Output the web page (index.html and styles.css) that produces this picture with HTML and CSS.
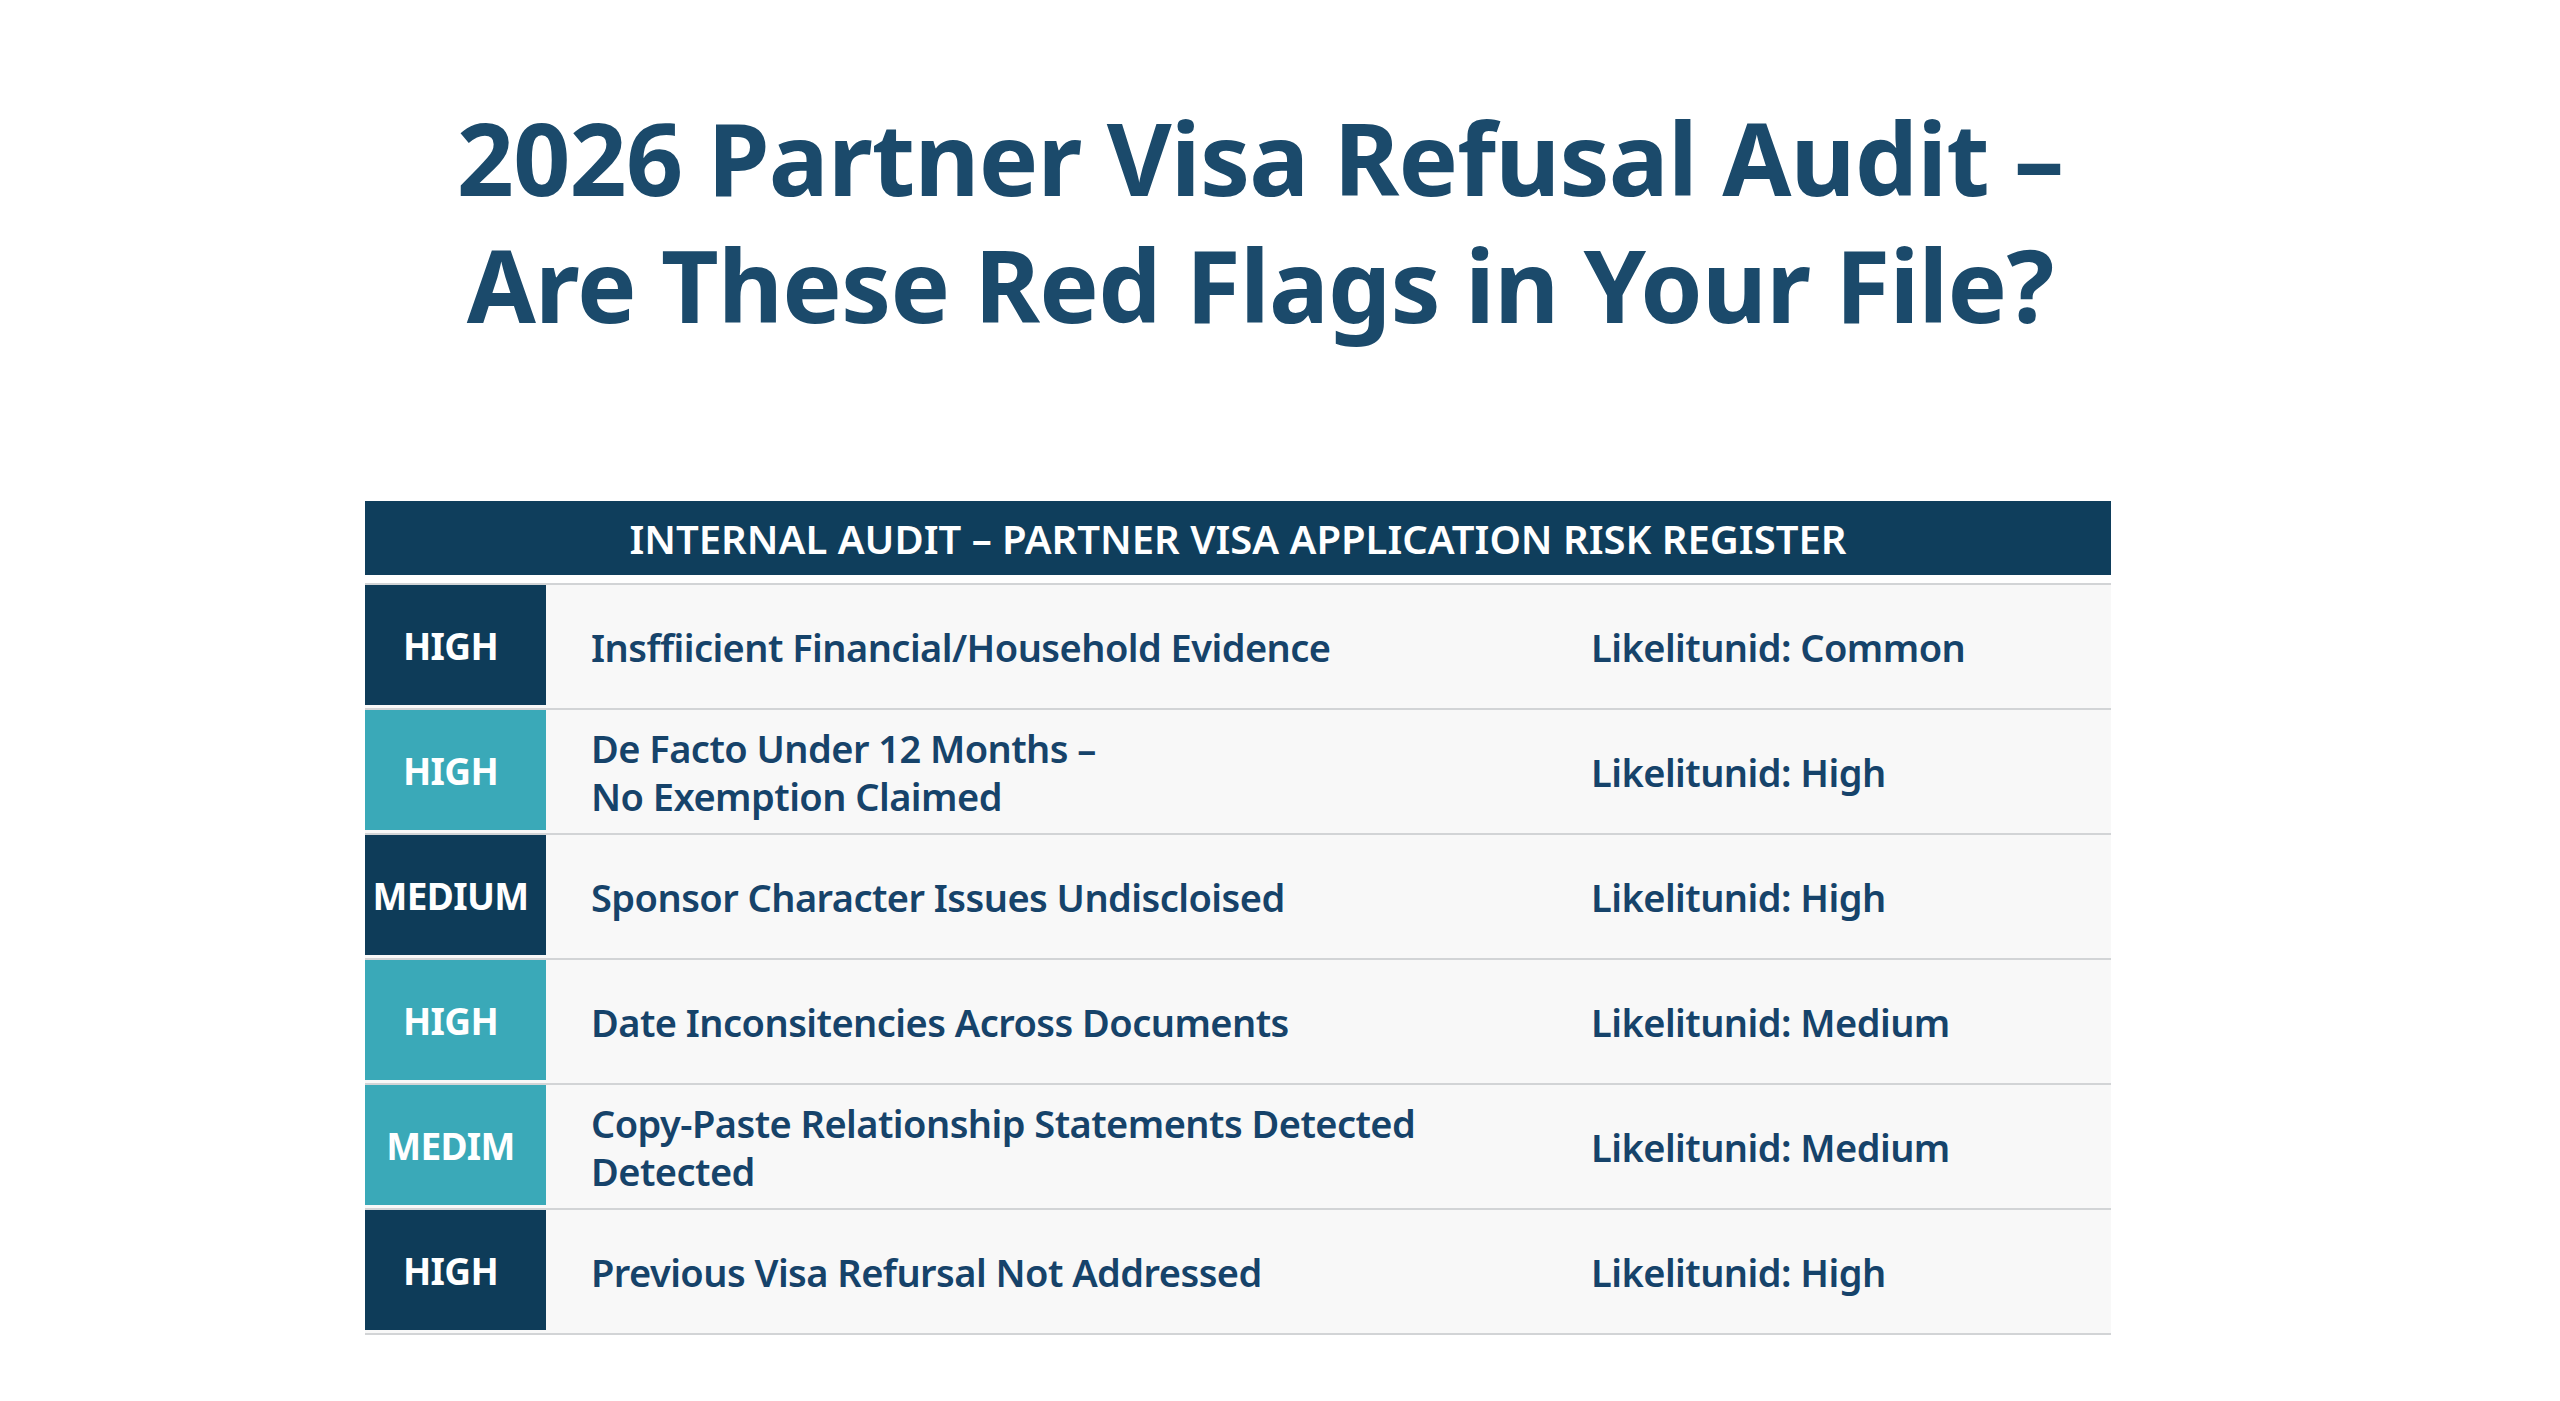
FILE: index.html
```html
<!DOCTYPE html>
<html lang="en">
<head>
<meta charset="utf-8">
<title>2026 Partner Visa Refusal Audit</title>
<link rel="stylesheet" href="styles.css">
</head>
<body>
<main class="page">
  <h1 class="title">2026 Partner Visa Refusal Audit –<br>Are These Red Flags in Your File?</h1>

  <section class="register">
    <header class="register-head">INTERNAL AUDIT – PARTNER VISA APPLICATION RISK REGISTER</header>

    <div class="row">
      <div class="badge badge-dark">HIGH</div>
      <div class="desc">Insffiicient Financial/Household Evidence</div>
      <div class="likely">Likelitunid: Common</div>
    </div>

    <div class="row">
      <div class="badge badge-teal">HIGH</div>
      <div class="desc">De Facto Under 12 Months –<br>No Exemption Claimed</div>
      <div class="likely">Likelitunid: High</div>
    </div>

    <div class="row">
      <div class="badge badge-dark">MEDIUM</div>
      <div class="desc">Sponsor Character Issues Undiscloised</div>
      <div class="likely">Likelitunid: High</div>
    </div>

    <div class="row">
      <div class="badge badge-teal">HIGH</div>
      <div class="desc">Date Inconsitencies Across Documents</div>
      <div class="likely">Likelitunid: Medium</div>
    </div>

    <div class="row">
      <div class="badge badge-teal">MEDIM</div>
      <div class="desc">Copy-Paste Relationship Statements Detected<br>Detected</div>
      <div class="likely">Likelitunid: Medium</div>
    </div>

    <div class="row row-last">
      <div class="badge badge-dark">HIGH</div>
      <div class="desc">Previous Visa Refursal Not Addressed</div>
      <div class="likely">Likelitunid: High</div>
    </div>
  </section>
</main>
</body>
</html>
```

FILE: styles.css
```css
html, body {
  margin: 0;
  padding: 0;
  background: #ffffff;
}

body {
  font-family: "Noto Sans", "Open Sans", "Liberation Sans", sans-serif;
  color: #16436a;
}

.page {
  padding-top: 94px;
  min-height: 1307px;
}

.title {
  margin: 0;
  padding-right: 40px;
  text-align: center;
  font-size: 100px;
  line-height: 127px;
  font-weight: 700;
  color: #1b4a6b;
  letter-spacing: -0.8px;
}

.register {
  width: 1746px;
  margin: 153px 0 0 365px;
}

.register-head {
  height: 74px;
  display: flex;
  align-items: center;
  justify-content: center;
  background: #0f3e5c;
  color: #ffffff;
  font-size: 40px;
  font-weight: 600;
  margin-bottom: 8px;
}

.row {
  display: grid;
  grid-template-columns: 181px 1fr 520px;
  align-items: start;
  height: 123px;
  border-top: 2px solid #d2d4d6;
  background: #f8f8f8;
  font-size: 38px;
  font-weight: 600;
  letter-spacing: -0.55px;
}

.row-last {
  border-bottom: 2px solid #d2d4d6;
}

.badge {
  height: 120px;
  display: flex;
  align-items: center;
  justify-content: center;
  padding-right: 10px;
  box-sizing: border-box;
  color: #ffffff;
  font-weight: 700;
  font-size: 37px;
  letter-spacing: -0.7px;
}

.badge-dark {
  background: #0e3c59;
}

.badge-teal {
  background: #3aa9b8;
}

.desc {
  height: 123px;
  display: flex;
  align-items: center;
  padding-left: 45px;
  line-height: 48px;
}

.likely {
  height: 123px;
  display: flex;
  align-items: center;
}
```
